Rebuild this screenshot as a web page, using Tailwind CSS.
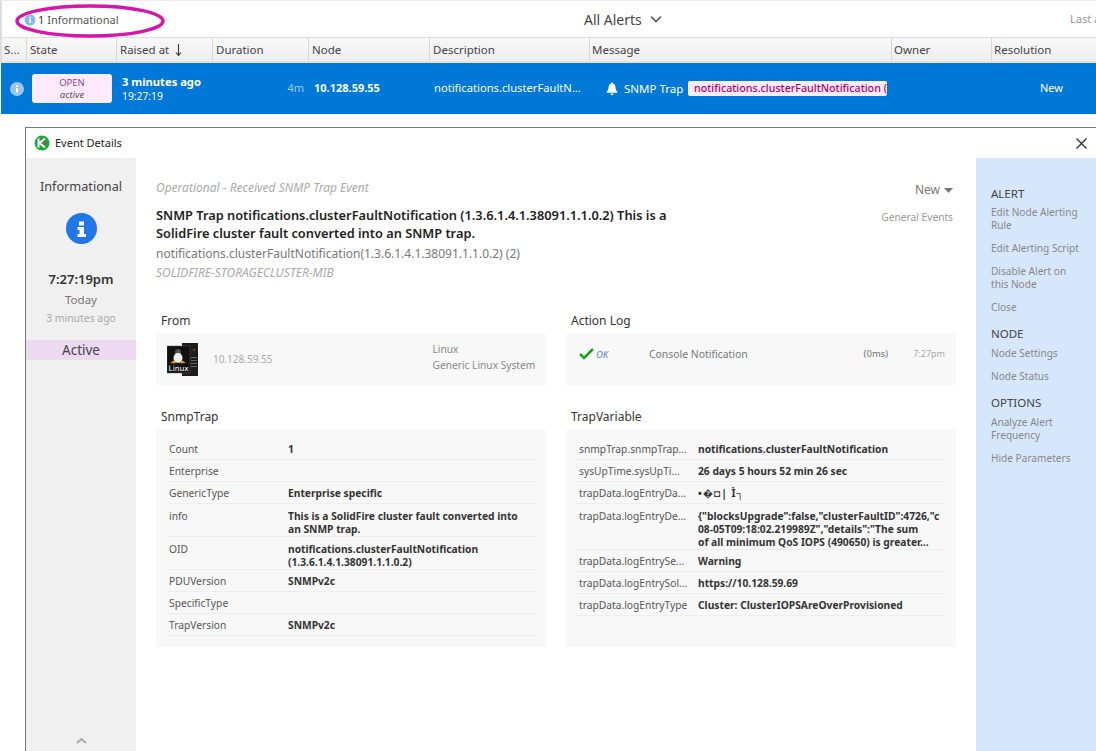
<!DOCTYPE html>
<html lang="en">
<head>
  <meta charset="UTF-8" />
  <title>All Alerts</title>
  <script src="https://cdn.jsdelivr.net/npm/@tailwindcss/browser@4"></script>
</head>
<body class="relative w-[1096px] h-[751px] overflow-hidden bg-white font-['Noto_Sans','Open_Sans',sans-serif] text-[11px] text-[#333]">
  <!-- top bar -->
  <div class="flex items-center h-[37px] border-t border-[#eee] border-l-2 border-l-[#ddd] relative">
    <div class="flex items-center pl-[22px] pt-[2px] w-[400px] text-[#555]">
      <svg class="w-[12px] h-[12px] mr-[2px]" viewBox="0 0 12 12"><circle cx="6" cy="6" r="5.5" fill="#8db9e6"/><rect x="5.2" y="5" width="1.6" height="4" fill="#fff"/><rect x="5.2" y="2.8" width="1.6" height="1.5" fill="#fff"/></svg>
      <span class="text-[#333]">1</span><span class="ml-[3px]">Informational</span>
    </div>
    <div class="flex items-center ml-[182px] text-[14px] text-[#444]">All Alerts
      <svg class="w-[12px] h-[8px] ml-[8px]" viewBox="0 0 12 8"><path d="M1 1.5l5 5 5-5" fill="none" stroke="#555" stroke-width="1.6"/></svg>
    </div>
    <div class="absolute left-[1068px] text-[#999] whitespace-nowrap">Last alert</div>
  </div>

  <!-- column headers -->
  <div class="flex h-[26px] bg-gradient-to-b from-[#f8f8f8] to-[#eeeeee] border-t border-[#ddd] border-b-2 border-b-[#e4e4e4] border-l-2 border-l-[#ddd] text-[#444] text-[11.5px] leading-[24px]">
    <div class="w-[25px] pl-[2px] border-r border-[#d8d8d8]">S...</div>
    <div class="w-[90px] pl-[3px] border-r border-[#d8d8d8]">State</div>
    <div class="w-[96px] pl-[3px] border-r border-[#d8d8d8] flex items-center">Raised at
      <svg class="w-[7px] h-[14px] ml-[6px]" viewBox="0 0 7 14"><path d="M3.5 1v11M1 9.5l2.5 3 2.5-3" fill="none" stroke="#333" stroke-width="1.1"/></svg>
    </div>
    <div class="w-[96px] pl-[3px] border-r border-[#d8d8d8]">Duration</div>
    <div class="w-[121px] pl-[3px] border-r border-[#d8d8d8]">Node</div>
    <div class="w-[160px] pl-[3px] border-r border-[#d8d8d8]">Description</div>
    <div class="w-[302px] pl-[2px] border-r border-[#d8d8d8]">Message</div>
    <div class="w-[100px] pl-[2px] border-r border-[#d8d8d8]">Owner</div>
    <div class="flex-1 pl-[2px]">Resolution</div>
  </div>

  <!-- selected alert row -->
  <div class="flex items-center h-[51px] ml-px bg-[#0078d7] text-white">
    <div class="w-[31px] flex justify-center pl-[1px]">
      <svg class="w-[14px] h-[14px]" viewBox="0 0 14 14"><circle cx="7" cy="7" r="7" fill="#9cc4ea"/><rect x="6" y="6" width="2" height="4.5" fill="#fff"/><rect x="6" y="3.2" width="2" height="1.8" fill="#fff"/></svg>
    </div>
    <div class="w-[80px] h-[29px] bg-[#fdeafd] rounded-[3px] flex flex-col items-center justify-center text-[9.5px] leading-[12px] text-[#8a4a8a]">
      <span>OPEN</span><span class="italic text-[#555]">active</span>
    </div>
    <div class="w-[150px] pl-[10px] leading-[14px]">
      <div class="font-bold text-[11.2px]">3 minutes ago</div>
      <div class="text-[10.3px]">19:27:19</div>
    </div>
    <div class="w-[42px] text-right text-[#9fcaf0]">4m</div>
    <div class="w-[130px] pl-[10px] font-bold">10.128.59.55</div>
    <div class="w-[172px] whitespace-nowrap text-[11.2px]">notifications.clusterFaultN...</div>
    <svg class="w-[12px] h-[14px] mr-[6px]" viewBox="0 0 12 14"><path d="M6 0.5c.7 0 1 .5 1 1 2 .6 2.4 2.4 2.5 4.2.1 2 .9 3 1.9 4v1H.6v-1c1-1 1.8-2 1.9-4C2.600 3.900 3 2.100 5 1.500c0-.5.300-1 1-1zM4.500 11.500h3c0 1-.6 1.700-1.500 1.700s-1.500-.7-1.500-1.700z" fill="#fff"/></svg>
    <div class="w-[64px] whitespace-nowrap text-[11.5px]">SNMP Trap</div>
    <div class="w-[199px] h-[15px] bg-[#fdeafd] rounded-[2px] pl-[6px] text-[#b0005f] font-medium text-[10.7px] leading-[15px] overflow-hidden whitespace-nowrap">notifications.clusterFaultNotification (1.3.6.1.4.1</div>
    <div class="ml-[153px]">New</div>
  </div>

  <!-- Event Details window -->
  <div class="absolute left-[25px] top-[127px] w-[1071px] h-[624px] bg-white border-l border-t border-[#777] flex flex-col">
    <div class="flex items-center h-[30px] pl-[8px] shrink-0">
      <svg class="w-[16px] h-[16px] mr-[5px]" viewBox="0 0 16 16"><circle cx="8" cy="8" r="7.5" fill="#19a83a"/><path d="M4.500 3.500v9M11 3.500L5.500 8l5.500 4.500" fill="none" stroke="#fff" stroke-width="2"/><circle cx="11.500" cy="8" r="1.500" fill="#e03030"/></svg>
      <span class="text-[#222]">Event Details</span>
      <svg class="w-[11px] h-[11px] ml-auto mr-[9px]" viewBox="0 0 11 11"><path d="M.5.5l10 10M10.500.5l-10 10" stroke="#222" stroke-width="1.100"/></svg>
    </div>

    <div class="flex flex-1 min-h-0">
      <!-- left status column -->
      <div class="w-[110px] bg-[#f0f0f0] flex flex-col items-center shrink-0 relative">
        <div class="mt-[19px] text-[12.7px] text-[#444]">Informational</div>
        <svg class="w-[31px] h-[31px] mt-[17px]" viewBox="0 0 31 31"><circle cx="15.500" cy="15.500" r="15.500" fill="#2176e8"/><path d="M13 8.500h5v4h-5zM11.500 14h6.500v7h2v3H11.500v-3h2v-4h-2z" fill="#fff"/></svg>
        <div class="mt-[26px] text-[13px] font-semibold text-[#333]">7:27:19pm</div>
        <div class="text-[11.500px] text-[#777] mt-[1px]">Today</div>
        <div class="text-[10.400px] text-[#aaa] mt-[3px]">3 minutes ago</div>
        <div class="w-full h-[20px] mt-[14px] bg-[#eed9f2] text-center text-[13.500px] leading-[20px] text-[#444]">Active</div>
        <svg class="absolute left-[50px] bottom-[7px] w-[11px] h-[7px]" viewBox="0 0 11 7"><path d="M1 6l4.500-4 4.500 4" fill="none" stroke="#aaa" stroke-width="2"/></svg>
      </div>

      <!-- main -->
      <div class="flex-1 px-[20px] min-w-0">
        <div class="flex h-[143px]">
          <div class="w-[520px] pt-[21px]">
            <div class="italic text-[#aaa] text-[12px] leading-[17px]">Operational - Received SNMP Trap Event</div>
            <div class="mt-[10px] font-semibold text-[12.8px] leading-[18px] text-[#222]">SNMP Trap notifications.clusterFaultNotification (1.3.6.1.4.1.38091.1.1.0.2) This is a SolidFire cluster fault converted into an SNMP trap.</div>
            <div class="mt-[2px] text-[12px] text-[#777] leading-[20px]">notifications.clusterFaultNotification(1.3.6.1.4.1.38091.1.1.0.2) (2)</div>
            <div class="italic text-[#aaa] text-[12px] leading-[18px]">SOLIDFIRE-STORAGECLUSTER-MIB</div>
          </div>
          <div class="flex-1 flex flex-col items-end pt-[23px] pr-[3px]">
            <div class="flex items-center text-[#777] text-[12px]">New
              <svg class="w-[9px] h-[5px] ml-[4px]" viewBox="0 0 9 5"><path d="M0 0h9L4.500 5z" fill="#777"/></svg>
            </div>
            <div class="mt-[11px] text-[10.2px] text-[#999]">General Events</div>
          </div>
        </div>

        <div class="grid grid-cols-[390px_390px] gap-x-[20px]">
          <div>
            <div class="pl-[5px] h-[32px] leading-[40px] text-[12px] text-[#333]">From</div>
            <div class="h-[52px] bg-[#f8f8f8] flex items-center pl-[11px]">
              <svg class="w-[31px] h-[33px]" viewBox="0 0 31 33">
                <rect x="15" y="0" width="16" height="33" fill="#1c1c1c"/><rect x="24" y="14" width="6" height="1" fill="#666"/><rect x="24" y="17" width="6" height="1" fill="#666"/><rect x="24" y="20" width="6" height="1" fill="#666"/><rect x="24" y="23" width="6" height="1" fill="#666"/><circle cx="27" cy="7" r="1" fill="#a33"/>
                <rect x="0" y="3" width="23" height="27" fill="#111" stroke="#555" stroke-width=".5"/>
                <ellipse cx="11" cy="10" rx="3" ry="4" fill="#555"/><ellipse cx="11" cy="15" rx="4.500" ry="5" fill="#eee"/><path d="M3 20l4.500-3 1.500 3.500zM19 20l-4.500-3-1.500 3.500z" fill="#e8a020"/>
                <text x="1.500" y="28" font-size="7.500" fill="#fff" font-family="DejaVu Sans">Linux</text>
              </svg>
              <div class="ml-[15px] text-[#aaa] text-[10px]">10.128.59.55</div>
              <div class="ml-[160px] text-[#888] text-[10.2px] leading-[16px] whitespace-nowrap -mt-[4px]">
                <div>Linux</div>
                <div>Generic Linux System</div>
              </div>
            </div>
          </div>
          <div>
            <div class="pl-[5px] h-[32px] leading-[40px] text-[12px] text-[#333]">Action Log</div>
            <div class="h-[52px] bg-[#f8f8f8] flex pt-[13px] pl-[13px] text-[#777] text-[10.4px] leading-[16px] whitespace-nowrap">
              <svg class="w-[15px] h-[12px] mt-[2px]" viewBox="0 0 15 12"><path d="M1 6l4 4 9-9" fill="none" stroke="#16a316" stroke-width="2.500"/></svg>
              <span class="ml-[2px] w-[53px] italic text-[9.5px] text-[#5b7fd0] pt-px">OK</span>
              <span>Console Notification</span>
              <span class="ml-[116px] text-[9.500px]">(0ms)</span>
              <span class="ml-[25px] text-[9px] text-[#aaa]">7:27pm</span>
            </div>
          </div>

          <div>
            <div class="pl-[5px] h-[44px] leading-[64px] text-[12px] text-[#333]">SnmpTrap</div>
            <div class="h-[218px] bg-[#f8f8f8] px-[10px] pt-[9px] text-[#555] text-[10.25px] leading-[13px]">
              <div class="grid grid-cols-[119px_1fr] border-b border-[#eee] h-[22px] pl-[3px] pt-[2px] items-center"><span>Count</span><b class="text-[#333]">1</b></div>
              <div class="grid grid-cols-[119px_1fr] border-b border-[#eee] h-[22px] pl-[3px] pt-[2px] items-center"><span>Enterprise</span></div>
              <div class="grid grid-cols-[119px_1fr] border-b border-[#eee] h-[22px] pl-[3px] pt-[2px] items-center"><span>GenericType</span><b class="text-[#333]">Enterprise specific</b></div>
              <div class="grid grid-cols-[119px_1fr] border-b border-[#eee] h-[33px] pl-[3px] pt-[6px]"><span>info</span><b class="text-[#333] max-w-[240px]">This is a SolidFire cluster fault converted into an SNMP trap.</b></div>
              <div class="grid grid-cols-[119px_1fr] border-b border-[#eee] h-[33px] pl-[3px] pt-[6px]"><span>OID</span><b class="text-[#333]">notifications.clusterFaultNotification (1.3.6.1.4.1.38091.1.1.0.2)</b></div>
              <div class="grid grid-cols-[119px_1fr] border-b border-[#eee] h-[22px] pl-[3px] pt-[2px] items-center"><span>PDUVersion</span><b class="text-[#333]">SNMPv2c</b></div>
              <div class="grid grid-cols-[119px_1fr] border-b border-[#eee] h-[22px] pl-[3px] pt-[2px] items-center"><span>SpecificType</span></div>
              <div class="grid grid-cols-[119px_1fr] border-b border-[#eee] h-[22px] pl-[3px] pt-[2px] items-center"><span>TrapVersion</span><b class="text-[#333]">SNMPv2c</b></div>
            </div>
          </div>
          <div>
            <div class="pl-[5px] h-[44px] leading-[64px] text-[12px] text-[#333]">TrapVariable</div>
            <div class="h-[218px] bg-[#f8f8f8] px-[10px] pt-[9px] text-[#555] text-[10.25px] leading-[13px]">
              <div class="grid grid-cols-[119px_1fr] border-b border-[#eee] h-[22px] pl-[3px] pt-[2px] items-center"><span>snmpTrap.snmpTrap...</span><b class="text-[#333]">notifications.clusterFaultNotification</b></div>
              <div class="grid grid-cols-[119px_1fr] border-b border-[#eee] h-[22px] pl-[3px] pt-[2px] items-center"><span>sysUpTime.sysUpTi...</span><b class="text-[#333]">26 days 5 hours 52 min 26 sec</b></div>
              <div class="grid grid-cols-[119px_1fr] border-b border-[#eee] h-[22px] pl-[3px] pt-[2px] items-center"><span>trapData.logEntryDa...</span><b class="text-[#333] tracking-[1px]">•�◘| Ì┐</b></div>
              <div class="grid grid-cols-[119px_1fr] border-b border-[#eee] h-[46px] pl-[3px] pt-[6px]"><span>trapData.logEntryDe...</span><b class="text-[#333] w-[245px] h-[39px] overflow-hidden whitespace-nowrap">{"blocksUpgrade":false,"clusterFaultID":4726,"c<br>08-05T09:18:02.219989Z","details":"The sum<br>of all minimum QoS IOPS (490650) is greater...</b></div>
              <div class="grid grid-cols-[119px_1fr] border-b border-[#eee] h-[22px] pl-[3px] pt-[2px] items-center"><span>trapData.logEntrySe...</span><b class="text-[#333]">Warning</b></div>
              <div class="grid grid-cols-[119px_1fr] border-b border-[#eee] h-[22px] pl-[3px] pt-[2px] items-center"><span>trapData.logEntrySol...</span><b class="text-[#333]">https://10.128.59.69</b></div>
              <div class="grid grid-cols-[119px_1fr] border-b border-[#eee] h-[22px] pl-[3px] pt-[2px] items-center"><span>trapData.logEntryType</span><b class="text-[#333]">Cluster: ClusterIOPSAreOverProvisioned</b></div>
            </div>
          </div>
        </div>
      </div>

      <!-- right actions -->
      <div class="w-[120px] bg-[#d6e6fb] shrink-0 pl-[15px] pr-[10px] pt-[28px] text-[10.1px] leading-[13px] text-[#888]">
        <div class="text-[11.5px] text-[#444] leading-[16px]">ALERT</div>
        <div class="mt-[4px]">Edit Node Alerting Rule</div>
        <div class="mt-[10px] whitespace-nowrap">Edit Alerting Script</div>
        <div class="mt-[10px]">Disable Alert on this Node</div>
        <div class="mt-[10px]">Close</div>
        <div class="mt-[12px] text-[11.5px] text-[#444] leading-[16px]">NODE</div>
        <div class="mt-[5px]">Node Settings</div>
        <div class="mt-[10px]">Node Status</div>
        <div class="mt-[12px] text-[11.5px] text-[#444] leading-[16px]">OPTIONS</div>
        <div class="mt-[5px]">Analyze Alert Frequency</div>
        <div class="mt-[10px]">Hide Parameters</div>
      </div>
    </div>
  </div>

  <!-- hand-drawn annotation -->
  <svg class="absolute left-[13px] top-[3px] w-[154px] h-[36px]" viewBox="0 0 154 36"><ellipse cx="77" cy="18" rx="73" ry="15" fill="none" stroke="#d516a8" stroke-width="3.500"/></svg>
</body>
</html>
